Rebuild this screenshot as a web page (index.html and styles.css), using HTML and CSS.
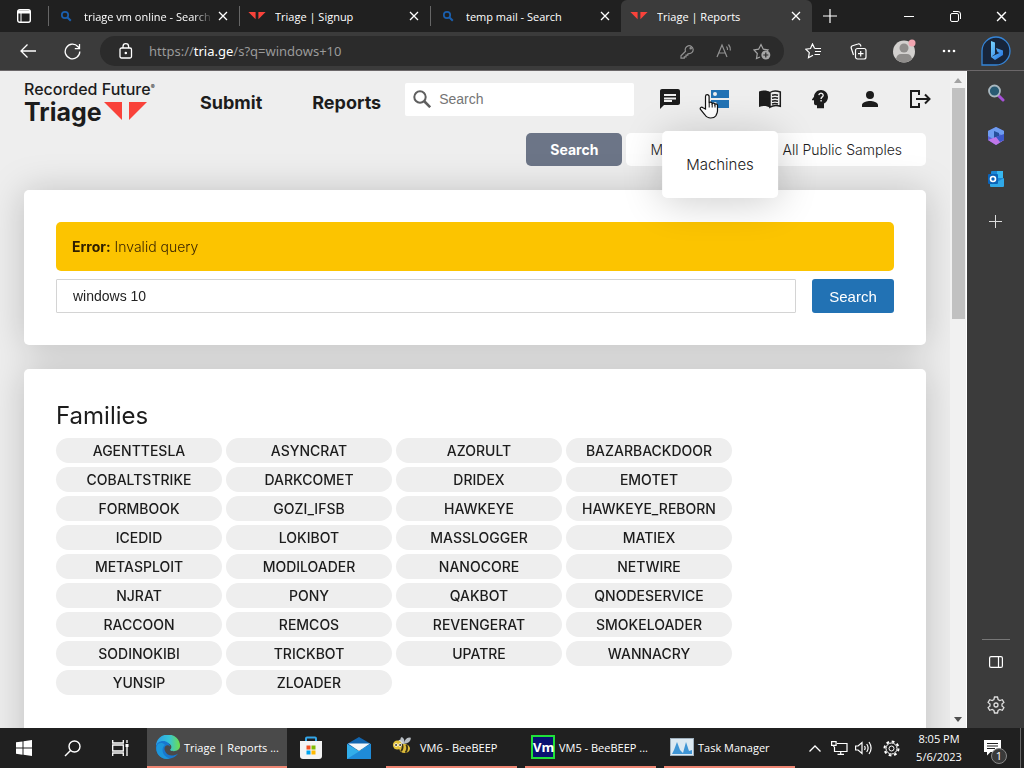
FILE: index.html
```html
<!DOCTYPE html>
<html lang="en">
<head>
  <meta charset="UTF-8" />
  <meta name="viewport" content="width=device-width, initial-scale=1.0" />
  <title>Triage | Reports</title>
  <link rel="stylesheet" href="styles.css">
</head>
<body>
<svg width="0" height="0" class="defs" aria-hidden="true">
  <symbol id="x" viewBox="0 0 10 10"><path d="M1 1l8 8M9 1L1 9" stroke="currentColor" stroke-width="1.3" fill="none"/></symbol>
  <symbol id="lens" viewBox="0 0 12 12"><circle cx="5" cy="5" r="3.2" fill="none" stroke="#1a5fae" stroke-width="1.7"/><path d="M7.5 7.5l3.3 3.3" stroke="#1a5fae" stroke-width="2"/></symbol>
  <symbol id="wings" viewBox="0 0 43 20"><path d="M0 0h18v18zM25 0h18L25 18z" fill="#f9423a"/></symbol>
</svg>

<div class="tab-strip">
  <button class="tab-menu" aria-label="Tab actions"><svg width="14" height="14" viewBox="0 0 14 14"><rect x=".7" y=".7" width="12.6" height="12.6" rx="2" fill="none" stroke="#fff" stroke-width="1.4"/><path d="M1 3h12" stroke="#fff" stroke-width="3"/><path d="M4 4v9" stroke="#fff"/></svg></button>
  <div class="tab"><svg class="tab-icon" width="12" height="12"><use href="#lens"/></svg><span class="tab-title fade">triage vm online - Search</span><button aria-label="Close tab"><svg width="10" height="10"><use href="#x"/></svg></button></div>
  <div class="tab"><svg class="tab-icon" width="16" height="8"><use href="#wings"/></svg><span class="tab-title">Triage | Signup</span><button aria-label="Close tab"><svg width="10" height="10"><use href="#x"/></svg></button></div>
  <div class="tab"><svg class="tab-icon" width="12" height="12"><use href="#lens"/></svg><span class="tab-title">temp mail - Search</span><button aria-label="Close tab"><svg width="10" height="10"><use href="#x"/></svg></button></div>
  <div class="tab active"><svg class="tab-icon" width="16" height="8"><use href="#wings"/></svg><span class="tab-title">Triage | Reports</span><button aria-label="Close tab"><svg width="10" height="10"><use href="#x"/></svg></button></div>
  <button class="new-tab" aria-label="New tab"><svg width="14" height="14" viewBox="0 0 14 14"><path d="M7 0v14M0 7h14" stroke="#fff" stroke-width="1.2"/></svg></button>
  <div class="window-buttons">
    <button aria-label="Minimize"><svg width="10" height="10"><path d="M0 5.500h10" stroke="#fff"/></svg></button>
    <button aria-label="Restore"><svg width="11" height="11" viewBox="0 0 11 11" fill="none" stroke="#fff"><rect x=".5" y="2.500" width="8" height="8" rx="1.500"/><path d="M3 .5h5a2.500 2.500 0 0 1 2.500 2.500v5"/></svg></button>
    <button aria-label="Close"><svg width="11" height="11"><use href="#x"/></svg></button>
  </div>
</div>

<div class="toolbar">
  <button aria-label="Back"><svg width="16" height="14" viewBox="0 0 16 14" fill="none" stroke="#fff" stroke-width="1.3"><path d="M16 7H1M7.500 .5L1 7l6.500 6.500"/></svg></button>
  <button aria-label="Refresh"><svg width="17" height="17" viewBox="0 0 17 17" fill="none" stroke="#fff" stroke-width="1.3"><path d="M15.800 8.500A7.300 7.300 0 1 1 14 3.700L15.500 5.500M15.500 1v4.700h-4.700"/></svg></button>
  <div class="address">
    <svg width="14" height="16" viewBox="0 0 14 16" fill="none" stroke="#fff" stroke-width="1.300"><rect x="1" y="5" width="11.500" height="10" rx="1.500"/><path d="M4 5V3.500a2.800 2.800 0 0 1 5.600 0V5"/><circle cx="6.800" cy="10" r=".6" fill="#fff"/></svg>
    <div class="url" role="textbox" aria-label="Address">https://<b>tria.ge</b>/s?q=windows+10</div>
    <button aria-label="Saved passwords"><svg width="15" height="15" viewBox="0 0 15 15" fill="none" stroke="#929292" stroke-width="1.200"><path d="M5.500 7.300A4 4 0 1 1 9 9.700L7.800 9.900v1.300H6v1.600H4.300v1.400H1v-2.500z"/><circle cx="10.700" cy="4.300" r=".7"/></svg></button>
    <button aria-label="Read aloud"><svg width="17" height="16" viewBox="0 0 17 16" fill="none" stroke="#929292" stroke-width="1.200"><path d="M1 14L6 2l5 12M3 10h6.200M10.500 3.500a5 5 0 0 1 1 3.500M12.500 1.500a8 8 0 0 1 1.800 6"/></svg></button>
    <button aria-label="Add to favorites"><svg width="18" height="18" viewBox="0 0 18 18" fill="none" stroke="#a5a5a5" stroke-width="1.200"><path d="M7 15l-3.500 1.500.8-5L1 8l4.600-.8L8 2.500l2.300 4.700 4.700.8-1 1"/><circle cx="12.800" cy="13" r="4.500" fill="#a5a5a5" stroke="none"/><path d="M12.800 10.500v5M10.300 13h5" stroke="#2b2b2b"/></svg></button>
  </div>
  <div class="toolbar-right">
    <button aria-label="Favorites"><svg width="17" height="16" viewBox="0 0 17 16" fill="none" stroke="#fff" stroke-width="1.200"><path d="M9.500 5.300L7.500 1 5.500 5.500.8 6.200l3.500 3.500-.8 5 4.500-2.500M9.500 5.500H16M10 8.500h6M9.500 11.500H15"/></svg></button>
    <button aria-label="Collections"><svg width="17" height="17" viewBox="0 0 17 17" fill="none" stroke="#fff" stroke-width="1.200"><rect x="5.500" y="5.500" width="10.500" height="10.500" rx="2"/><path d="M10.700 8v5.500M8 10.700h5.500M3.500 12L1.200 5A2 2 0 0 1 2.500 2.700L8 1a2 2 0 0 1 2.500 1l.5 1.500"/></svg></button>
    <button aria-label="Profile"><svg width="24" height="24" viewBox="0 0 24 24"><circle cx="12" cy="12.500" r="11" fill="#d2d0ce"/><circle cx="12" cy="9" r="4.500" fill="#8f8d8b"/><path d="M4 20q1-5 5-5h6q4 0 5 5a11 11 0 0 1-16 0z" fill="#8f8d8b"/><circle cx="20" cy="4" r="3.500" fill="#f1a5b0"/></svg></button>
    <button aria-label="Settings and more"><svg width="14" height="4"><g fill="#fff"><circle cx="2" cy="2" r="1.300"/><circle cx="7" cy="2" r="1.300"/><circle cx="12" cy="2" r="1.300"/></g></svg></button>
    <button aria-label="Bing chat"><svg width="30" height="30" viewBox="0 0 30 30"><defs><linearGradient id="bing" x1="0" y1="0" x2="1" y2="1"><stop stop-color="#7ad5ff"/><stop offset="1" stop-color="#2070e0"/></linearGradient></defs><path d="M1 29V15A14 14 0 1 1 15 29z" fill="#17253b" stroke="#3585d8" stroke-width="1.300"/><path d="M10 5l4 1.500V18l-4 3zM10 21l4 3 8-5v-4.500L15 12l1.500 4 2 1-4.500 2z" fill="url(#bing)"/></svg></button>
  </div>
</div>

<div class="window">
  <div class="page">
    <header class="site-header">
      <a class="logo" href="#">
        <span class="logo-top">Recorded Future<sup>®</sup></span>
        <span class="logo-bottom">Triage<svg width="43" height="20"><use href="#wings"/></svg></span>
      </a>
      <nav class="main-nav">
        <a href="#">Submit</a>
        <a href="#">Reports</a>
      </nav>
      <label class="header-search">
        <svg width="18" height="18" viewBox="0 0 18 18" fill="none" stroke="#5f5f5f"><circle cx="7" cy="7" r="5.700" stroke-width="2"/><path d="M11 11l6.200 6.200" stroke-width="2.600"/></svg>
        <input type="search" placeholder="Search" aria-label="Search">
      </label>
      <nav class="icon-nav">
        <a href="#" aria-label="Chat"><svg width="24" height="24" viewBox="0 0 24 24"><path fill="#1c1c1c" d="M20 2H4c-1.100 0-2 .9-2 2v18l4-4h14c1.100 0 2-.9 2-2V4c0-1.100-.9-2-2-2zM6 9V7h12v2zm0 3.500v-2h12v2zM6 14v-1h8v2H6z"/></svg></a>
        <div class="dropdown">
          <a href="#" aria-label="Machines"><svg width="24" height="24" viewBox="0 0 24 24"><path fill="#2272b4" fill-rule="evenodd" d="M3 3h18v8H3zM3 13h18v8H3zM7 5a2 2 0 1 0 0 4 2 2 0 0 0 0-4zM7 15a2 2 0 1 0 0 4 2 2 0 0 0 0-4z"/></svg></a>
          <svg class="pointer" width="20" height="26" viewBox="0 0 20 26" aria-hidden="true"><path d="M6.500 16V3.500a1.800 1.800 0 0 1 3.600 0V10a1.600 1.600 0 0 1 3 .6 1.600 1.600 0 0 1 2.800.9 1.500 1.500 0 0 1 2.600 1.200V18c0 2-1 3.500-1.800 5-1 1.500-3 2-5 2-3.500 0-4.700-1.500-6-3.500L1.500 16.500c-1-2 1-3 2.500-1.700z" fill="#fff" stroke="#111" stroke-width="1.200"/><path d="M10.200 10v4.500M13.200 11v3.500M16 12v2.500" stroke="#111"/></svg>
          <div class="dropdown-menu"><a href="#">Machines</a></div>
        </div>
        <a href="#" aria-label="Documentation"><svg width="24" height="24" viewBox="0 0 24 24"><path fill="#1c1c1c" d="M12 5C9 3 5 3 1 4.500V20c4-1.500 8-1.200 11 .7z"/><path d="M12 5.500c3-2 6.500-2 10.300-.5v14.200c-3.800-1.300-7.300-1-10.300 1z" fill="#eee" stroke="#1c1c1c" stroke-width="1.500"/><path d="M14 8.300q3-1 6 0M14 11.300q3-1 6 0M14 14.300q3-1 6 0M14 17q3-1 6 0" fill="none" stroke="#1c1c1c" stroke-width="1.500"/></svg></a>
        <a href="#" aria-label="Help"><svg width="24" height="24" viewBox="0 0 24 24"><path fill="#1c1c1c" d="M13 3C9.200 3 6.100 5.900 6 9.700L4.100 12.200c-.3.400 0 1 .4 1H6v3c0 1.100.9 2 2 2h1v3h7v-4.700c2.400-1.100 4-3.600 4-6.500a7 7 0 0 0-7-7z"/><path d="M10.800 8.200q.3-2 2.200-2t2.200 2q0 1-1.200 1.900-.9.700-.9 1.900M13.100 13v1.500" fill="none" stroke="#eee" stroke-width="1.400"/></svg></a>
        <a href="#" aria-label="Account"><svg width="24" height="24" viewBox="0 0 24 24"><path fill="#1c1c1c" d="M12 12a4 4 0 1 0 0-8 4 4 0 0 0 0 8zm0 2c-2.700 0-8 1.300-8 4v2h16v-2c0-2.700-5.300-4-8-4z"/></svg></a>
        <a href="#" aria-label="Log out"><svg width="24" height="24" viewBox="0 0 24 24" fill="none" stroke="#1c1c1c" stroke-width="2"><path d="M11 8V4H3v16h8v-4M8 12h13M17 7.500l4.500 4.500-4.500 4.500"/></svg></a>
      </nav>
    </header>

    <nav class="filters">
      <a class="filter selected" href="#">Search</a>
      <a class="filter" href="#">My Samples</a>
      <a class="filter" href="#">All Public Samples</a>
    </nav>

    <main class="cards">
      <section class="card">
        <div class="alert" role="alert"><strong>Error:</strong> Invalid query</div>
        <form class="query">
          <input type="text" value="windows 10" aria-label="Query">
          <button type="button">Search</button>
        </form>
      </section>
      <section class="card">
        <h2>Families</h2>
        <div class="families">
          <a href="#">AGENTTESLA</a>
          <a href="#">ASYNCRAT</a>
          <a href="#">AZORULT</a>
          <a href="#">BAZARBACKDOOR</a>
          <a href="#">COBALTSTRIKE</a>
          <a href="#">DARKCOMET</a>
          <a href="#">DRIDEX</a>
          <a href="#">EMOTET</a>
          <a href="#">FORMBOOK</a>
          <a href="#">GOZI_IFSB</a>
          <a href="#">HAWKEYE</a>
          <a href="#">HAWKEYE_REBORN</a>
          <a href="#">ICEDID</a>
          <a href="#">LOKIBOT</a>
          <a href="#">MASSLOGGER</a>
          <a href="#">MATIEX</a>
          <a href="#">METASPLOIT</a>
          <a href="#">MODILOADER</a>
          <a href="#">NANOCORE</a>
          <a href="#">NETWIRE</a>
          <a href="#">NJRAT</a>
          <a href="#">PONY</a>
          <a href="#">QAKBOT</a>
          <a href="#">QNODESERVICE</a>
          <a href="#">RACCOON</a>
          <a href="#">REMCOS</a>
          <a href="#">REVENGERAT</a>
          <a href="#">SMOKELOADER</a>
          <a href="#">SODINOKIBI</a>
          <a href="#">TRICKBOT</a>
          <a href="#">UPATRE</a>
          <a href="#">WANNACRY</a>
          <a href="#">YUNSIP</a>
          <a href="#">ZLOADER</a>
        </div>
      </section>
    </main>
  </div>

  <div class="scrollbar" aria-hidden="true">
    <svg width="8" height="5"><path d="M0 5l4-5 4 5z" fill="#a3a3a3"/></svg>
    <div class="track"><div class="thumb"></div></div>
    <svg width="8" height="5"><path d="M0 0l4 5 4-5z" fill="#505050"/></svg>
  </div>

  <aside class="sidebar">
    <button aria-label="Search"><svg width="18" height="18" viewBox="0 0 18 18"><path d="M11 11l5 5" stroke="#a650d8" stroke-width="3" stroke-linecap="round"/><circle cx="7.500" cy="7" r="5.500" fill="#285a73" stroke="#a9b8c0" stroke-width="1.800"/></svg></button>
    <button aria-label="Microsoft 365"><svg width="18" height="20" viewBox="0 0 18 20"><path d="M9 1l8 4v9l-8 5-8-5V5z" fill="#5a63d8"/><path d="M9 1l8 4v5l-5-2-3 2-1 4-7-4V5z" fill="#6e9cf0"/><path d="M7 5l5 2v3l-5 2z" fill="#254f9c"/><path d="M1 14l8-3 8-1v4l-8 5z" fill="#c077e8"/><path d="M9 11l8-3v6l-4 2z" fill="#3b58c9"/></svg></button>
    <button aria-label="Outlook"><svg width="18" height="18" viewBox="0 0 18 18"><rect x="4" y="1" width="12" height="13" rx="1" fill="#1a87d6"/><path d="M10 1h6v7h-6z" fill="#37b8f1"/><path d="M3 8l7 4 7-4v8a1 1 0 0 1-1 1H4a1 1 0 0 1-1-1z" fill="#30a9e8"/><rect x="1" y="4" width="10" height="10" rx="1" fill="#0a63b8"/><circle cx="6" cy="9" r="2.500" fill="none" stroke="#fff" stroke-width="1.600"/></svg></button>
    <button aria-label="Customize"><svg width="13" height="13"><path d="M6.500 0v13M0 6.500h13" stroke="#ddd"/></svg></button>
    <div class="sidebar-bottom">
      <button aria-label="Hide sidebar"><svg width="14" height="12" viewBox="0 0 14 12" fill="none" stroke="#fff" stroke-width="1.200"><rect x=".6" y=".6" width="12.800" height="10.800" rx="1.500"/><path d="M9.500 1v10"/></svg></button>
      <button aria-label="Settings"><svg width="18" height="18" viewBox="0 0 18 18" fill="none" stroke="#ddd" stroke-width="1.300"><path d="M7.500 1h3l.6 2.500 1.700 1 2.500-.8 1.600 2.700L15 8v2l1.900 1.600-1.600 2.700-2.500-.8-1.700 1-.6 2.500h-3l-.6-2.500-1.700-1-2.500.8-1.600-2.700L3 10V8L1.100 6.400l1.600-2.700 2.500.8 1.700-1z"/><circle cx="9" cy="9" r="2"/></svg></button>
    </div>
  </aside>
</div>

<footer class="taskbar">
  <button class="task-icon" aria-label="Start"><svg width="16" height="16"><path d="M0 2.300l6.500-.9v6.200H0zM7.500 1.200L16 0v7.600H7.500zM0 8.500h6.500v6.200L0 13.800zM7.500 8.500H16V16l-8.500-1.200z" fill="#fff"/></svg></button>
  <button class="task-icon" aria-label="Search"><svg width="17" height="17" fill="none" stroke="#fff" stroke-width="1.400"><circle cx="10.500" cy="6.500" r="5.500"/><path d="M6.500 10.500L1 16"/></svg></button>
  <button class="task-icon" aria-label="Task view"><svg width="17" height="16" fill="none" stroke="#fff" stroke-width="1.300"><path d="M.7 0v3h10.600V0M.7 16v-3h10.600v3M.7 5h10.600v6H.7zM15 0v3M15 7v9"/><path d="M13.500 4h3v3h-3z" fill="#fff" stroke="none"/></svg></button>
  <button class="task active"><svg width="24" height="24" viewBox="0 0 24 24"><defs><linearGradient id="edge1"><stop stop-color="#2b9de8"/><stop offset=".55" stop-color="#36c4d6"/><stop offset="1" stop-color="#6fdd4b"/></linearGradient></defs><path d="M0 11A12 11.500 0 0 1 24 11c0 5-7 6.500-10 4 3-3 1-7-4-7-5 0-9 2-10 3z" fill="url(#edge1)"/><path d="M0 12c0-4 4-6 7-6 4 0 7 2.500 7 5.500-3-3-7 .5-5 4.500 2 5 8 6 13 2.500C17 26.500 0 26.500 0 12z" fill="#1877ce"/><path d="M9 10c-5 4-2 12 5 13.500C4 26.500-3 15 2 9c2-1.500 5-1.500 7 1z" fill="#1d96da"/></svg>Triage | Reports ...</button>
  <button class="task-icon" aria-label="Store"><svg width="24" height="24" viewBox="0 0 24 24"><path d="M7 6V2.500a1 1 0 0 1 1-1h8a1 1 0 0 1 1 1V6" fill="none" stroke="#34a6e8" stroke-width="2"/><path d="M1 5h22v15a3 3 0 0 1-3 3H4a3 3 0 0 1-3-3z" fill="#f3f3f3"/><path d="M7.500 9.500h4v4h-4z" fill="#f25022"/><path d="M12.500 9.500h4v4h-4z" fill="#7fba00"/><path d="M7.500 14.500h4v4h-4z" fill="#00a4ef"/><path d="M12.500 14.500h4v4h-4z" fill="#ffb900"/></svg></button>
  <button class="task-icon" aria-label="Mail"><svg width="24" height="22" viewBox="0 0 24 22"><path d="M0 7l12-7 12 7v5H0z" fill="#1165af"/><path d="M0 7l12 7 12-7v15H0z" fill="#32aeea"/><path d="M0 22l24-15v15z" fill="#1f8bd8"/><path d="M1 6.500h22L12 14z" fill="#f4f8fb"/></svg></button>
  <button class="task open"><svg width="24" height="24" viewBox="0 0 24 24"><g transform="translate(0 1) scale(.9)"><path d="M10 9q-2-7 1-8 4 2 2 8zM13 9q2-9 8-7 0 6-8 7z" fill="#b8bec4"/><path d="M5 7l4-3 4 4z" fill="#d9dde0"/><circle cx="6" cy="10" r="5" fill="#e2c23a"/><ellipse cx="14" cy="14" rx="6" ry="5" fill="#dfbd3a"/><path d="M11 9q2 4-1 8M16 9.500q2 5-1 9" stroke="#3b3316" stroke-width="2" fill="none"/><circle cx="4.500" cy="10" r="2" fill="#fff"/><circle cx="9" cy="10" r="2" fill="#fff"/><circle cx="4.500" cy="10" r="1" fill="#222"/><circle cx="9" cy="10" r="1" fill="#222"/></g></svg>VM6 - BeeBEEP</button>
  <button class="task open"><span class="vm" aria-hidden="true">Vm</span>VM5 - BeeBEEP ...</button>
  <button class="task open"><svg width="24" height="18" viewBox="0 0 24 18"><rect x=".5" y=".5" width="23" height="17" fill="#dce9f2" stroke="#9fb0bd"/><path d="M2 16l2-4 3-8 3 8 3 3 3-11 3 9 3-1v4z" fill="#3f95d5"/></svg>Task Manager</button>
  <div class="tray">
    <button aria-label="Hidden icons"><svg width="12" height="7" fill="none" stroke="#fff" stroke-width="1.300"><path d="M.5 6.500L6 1l5.500 5.500"/></svg></button>
    <button aria-label="Network"><svg width="17" height="14" viewBox="0 0 17 14" fill="none" stroke="#fff" stroke-width="1.200"><path d="M6 2.500h10v8H3.500V6M9.700 11v2.500M6.500 13.400h6.500M.6 .6h4.500v3.800H.6zM2.900 4.500V6"/></svg></button>
    <button aria-label="Volume"><svg width="17" height="14" viewBox="0 0 17 14" fill="none" stroke="#fff" stroke-width="1.200"><path d="M.6 5v4h2.500L7 12.500v-11L3.100 5zM9.500 5q1.300 2 0 4M11.700 3q2.800 4 0 8M14 1q4.200 6 0 12"/></svg></button>
    <button aria-label="Settings"><svg width="17" height="17" viewBox="0 0 17 17" fill="none" stroke="#fff"><circle cx="8.500" cy="8.500" r="7" stroke-width="2" stroke-dasharray="2.750 2.750"/><circle cx="8.500" cy="8.500" r="5.500"/><circle cx="8.500" cy="8.500" r="2.500"/></svg></button>
    <div class="clock"><time>8:05 PM</time><time>5/6/2023</time></div>
    <button class="notices" aria-label="Notifications"><svg width="17" height="16" viewBox="0 0 17 16"><path d="M0 0h17v12H6.500L3 15.500V12H0z" fill="#fff"/><path d="M3 3.500h11M3 6h11M3 8.500h8" stroke="#202020"/></svg><span class="badge">1</span></button>
  </div>
</footer>
</body>
</html>
```
FILE: styles.css
```css
* {
  box-sizing: border-box;
}
body {
  margin: 0;
  height: 100vh;
  display: flex;
  flex-direction: column;
  overflow: hidden;
  background: #3b3b3b;
  color: #1c1c1c;
  font-family: Inter, "Liberation Sans", sans-serif;
}
a {
  color: inherit;
  text-decoration: none;
}
button {
  display: flex;
  align-items: center;
  justify-content: center;
  padding: 0;
  border: none;
  background: none;
  color: #fff;
  cursor: pointer;
}
svg {
  flex: none;
}
.defs {
  position: absolute;
}

/* tabs */
.tab-strip {
  display: flex;
  flex: none;
  height: 32px;
  background: #202020;
  color: #fff;
  font: 11px "Open Sans", sans-serif;
}
.tab-menu {
  width: 48px;
}
.tab {
  display: flex;
  align-items: center;
  flex: 0 1 191px;
  min-width: 0;
  padding: 0 10px 0 9px;
  background: linear-gradient(#666, #666) left center / 1px 20px no-repeat;
}
.tab-icon {
  width: 18px;
}
.tab-title {
  flex: 1;
  margin-left: 9px;
  overflow: hidden;
  white-space: nowrap;
}
.fade {
  mask-image: linear-gradient(to right, #000 85%, transparent);
}
.tab button {
  width: 12px;
  margin-left: 4px;
}
.tab.active {
  background: #3b3b3b;
  border-radius: 6px 6px 0 0;
}
.new-tab {
  width: 36px;
}
.window-buttons {
  display: flex;
  margin-left: auto;
}
.window-buttons button {
  width: 46px;
}

/* toolbar */
.toolbar {
  display: flex;
  align-items: center;
  flex: none;
  height: 39px;
  padding: 0 3px 0 6px;
  border-bottom: 1px solid #6b6769;
}
.toolbar > button {
  width: 44px;
  height: 30px;
}
.address {
  display: flex;
  align-items: center;
  flex: 1;
  height: 30px;
  margin-left: 6px;
  padding: 0 4px 0 19px;
  border-radius: 15px;
  background: #2b2b2b;
}
.address button {
  width: 37px;
}
.url {
  flex: 1;
  margin-left: 16px;
  color: #9a9a9a;
  font: 13px "Noto Sans", sans-serif;
}
.url b {
  color: #fff;
  font-weight: 400;
}
.toolbar-right {
  display: flex;
  align-items: center;
  margin-left: 7px;
}
.toolbar-right button {
  width: 45px;
}
.toolbar-right button:last-child {
  width: 50px;
}

/* page */
.window {
  display: flex;
  flex: 1;
  min-height: 0;
}
.page {
  flex: 1;
  overflow: hidden;
  background: #eee;
}
.site-header {
  position: relative;
  z-index: 2;
  display: flex;
  align-items: center;
  height: 62px;
  padding: 0 5px 6px 24px;
}
.logo {
  display: flex;
  flex-direction: column;
  width: 152px;
  margin-top: 6px;
}
.logo-top {
  font-size: 16px;
  font-weight: 500;
  line-height: 20px;
  white-space: nowrap;
}
.logo-top sup {
  font-size: 6px;
  line-height: 0;
  vertical-align: 6px;
}
.logo-bottom {
  display: flex;
  align-items: center;
  gap: 2px;
  font-size: 25px;
  font-weight: 700;
  line-height: 26px;
}
.main-nav {
  display: flex;
  gap: 50px;
  margin: 6px 0 0 24px;
  font-size: 18px;
  font-weight: 700;
}
.header-search {
  display: flex;
  align-items: center;
  flex: 1;
  height: 33px;
  margin: 0 11px 0 24px;
  padding: 0 8px;
  background: #fff;
  border-radius: 2px;
}
.header-search input {
  flex: 1;
  min-width: 0;
  margin-left: 8px;
  padding: 0;
  border: none;
  outline: none;
  font: 14px "Liberation Sans", sans-serif;
}
.header-search input::placeholder {
  color: #757575;
}
.icon-nav {
  display: flex;
  margin-top: 4px;
}
.icon-nav > a,
.dropdown {
  display: flex;
  justify-content: center;
  width: 50px;
}
.dropdown {
  position: relative;
}
.dropdown-menu {
  position: absolute;
  top: 44px;
  left: 50%;
  transform: translateX(-50%);
  padding: 24px;
  border-radius: 5px;
  background: #fff;
  box-shadow: 0 4px 40px rgba(0, 0, 0, 0.2);
  font-size: 15px;
  font-weight: 300;
  line-height: 19px;
}
.pointer {
  position: absolute;
  top: 6px;
  left: 4px;
}
.filters {
  display: flex;
  justify-content: flex-end;
  gap: 4px;
  padding: 0 24px;
  font-size: 14px;
  font-weight: 300;
  line-height: 33px;
}
.filter {
  padding: 0 24px;
  border-radius: 5px;
  background: #fff;
}
.filter.selected {
  background: #6c7587;
  color: #fff;
  font-weight: 700;
}
.cards {
  display: flex;
  flex-direction: column;
  gap: 24px;
  padding: 24px;
  filter: drop-shadow(0 2px 18px rgba(0, 0, 0, 0.2));
}
.card {
  padding: 32px;
  border-radius: 5px;
  background: #fff;
}
.card:last-child {
  min-height: 480px;
}
.alert {
  padding: 16px;
  border-radius: 5px;
  background: #fcc400;
  color: #3c2600;
  font-size: 14px;
  font-weight: 300;
  line-height: 17px;
}
.alert strong {
  color: #302000;
  font-weight: 700;
}
.query {
  display: flex;
  gap: 16px;
  margin-top: 8px;
}
.query input {
  flex: 1;
  min-width: 0;
  height: 34px;
  padding: 0 16px;
  border: 1px solid #d4d4d4;
  border-radius: 1px;
  color: #222;
  font: 14px "Liberation Sans", sans-serif;
}
.query button {
  width: 82px;
  height: 34px;
  border-radius: 3px;
  background: #2272b4;
  font: 15px "Liberation Sans", sans-serif;
}
h2 {
  margin: 0 0 8px;
  font-size: 24px;
  font-weight: 400;
  line-height: 29px;
}
.families {
  display: grid;
  grid-template-columns: repeat(auto-fill, 166px);
  gap: 4px;
  max-width: 680px;
}
.families a {
  border-radius: 13px;
  background: #eee;
  font-size: 14px;
  font-weight: 500;
  line-height: 25px;
  text-align: center;
}

/* scrollbar */
.scrollbar {
  display: flex;
  flex-direction: column;
  align-items: center;
  width: 17px;
  padding: 7px 0 6px;
  border-right: 1px solid #fff;
  background: #f1f1f1;
}
.track {
  flex: 1;
  width: 13px;
  padding: 5px 0;
}
.thumb {
  height: 37%;
  background: #c1c1c1;
}

/* sidebar */
.sidebar {
  display: flex;
  flex-direction: column;
  align-items: center;
  width: 57px;
  background: #3b3b3b;
}
.sidebar button {
  flex: none;
  width: 42px;
  height: 43px;
}
.sidebar-bottom {
  display: flex;
  flex-direction: column;
  align-items: center;
  width: 28px;
  margin-top: auto;
  padding-bottom: 2px;
  border-top: 1px solid #777;
}

/* taskbar */
.taskbar {
  display: flex;
  flex: none;
  height: 40px;
  background: #202020;
  color: #fff;
  font: 11px "Open Sans", sans-serif;
}
.task-icon {
  width: 48px;
}
.task {
  gap: 4px;
  width: 131px;
  margin-right: 8px;
  padding-left: 6px;
  justify-content: flex-start;
  border-bottom: 2px solid #ee8673;
  font: inherit;
  white-space: nowrap;
}
.task.active {
  width: 140px;
  margin: 0 0 0 3px;
  padding-left: 9px;
  background: #4a4a4a;
}
.task-icon + .task.open {
  margin-left: 3px;
}
.vm {
  width: 24px;
  border: 2px solid #1fe03a;
  background: #0a1172;
  font-size: 13px;
  font-weight: 700;
  line-height: 20px;
}
.tray {
  display: flex;
  align-items: center;
  margin-left: auto;
  padding-right: 3px;
}
.tray button {
  width: 24px;
  height: 40px;
}
.tray button:nth-of-type(4) {
  width: 32px;
}
.clock {
  display: flex;
  flex-direction: column;
  width: 64px;
  line-height: 18px;
  text-align: center;
}
.tray .notices {
  position: relative;
  width: 50px;
  padding-right: 6px;
  border-right: 1px solid #666;
}
.badge {
  position: absolute;
  top: 20px;
  left: 20px;
  width: 16px;
  border: 1px solid #888;
  border-radius: 50%;
  background: #3a3a3a;
  font: 11px/14px "Open Sans", sans-serif;
}
```
